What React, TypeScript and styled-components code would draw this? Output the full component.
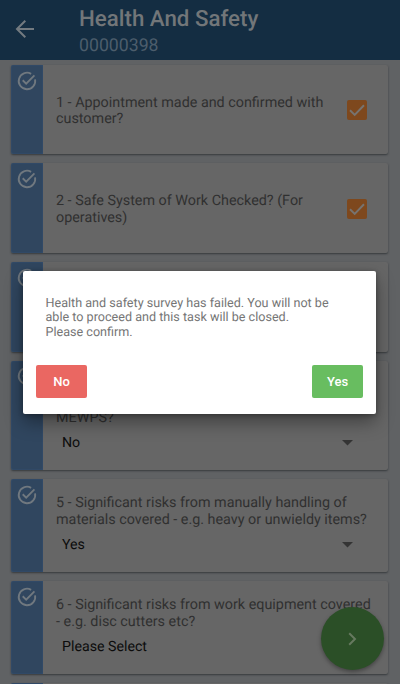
import React from 'react';
import styled, { createGlobalStyle } from 'styled-components';

const Global = createGlobalStyle`
  * { box-sizing: border-box; }
  body { margin: 0; background: #606264; overflow: hidden; }
  button { font-family: inherit; border: 0; padding: 0; }
`;

const Screen = styled.div`
  position: relative;
  width: 400px;
  height: 684px;
  overflow: hidden;
  background: #606264;
  font-family: Roboto, sans-serif;
  text-rendering: geometricPrecision;
`;

const Header = styled.header`
  display: flex;
  height: 60px;
  background: #142d42;
`;

const BackButton = styled.button`
  display: flex;
  width: 79px;
  padding: 17px 0 0 13px;
  background: none;
`;

const Titles = styled.div`
  padding-top: 6px;
`;

const Title = styled.h1`
  margin: 0;
  font-size: 22.3px;
  line-height: 27px;
  font-weight: 500;
  white-space: nowrap;
  color: #727679;
`;

const Subtitle = styled.div`
  font-size: 17.7px;
  line-height: 26px;
  color: #4c5d6c;
`;

const List = styled.main`
  display: flex;
  flex-direction: column;
  gap: 9px;
  padding: 5px 12px 0 11px;
`;

const Card = styled.section<{ $height: number }>`
  display: flex;
  flex: none;
  height: ${(p) => p.$height}px;
  border-radius: 2px;
  background: #666;
  box-shadow: 0 1px 2px rgba(20, 25, 30, 0.55);
  overflow: hidden;
`;

const Strip = styled.div`
  flex: none;
  width: 32px;
  padding: 4.6px 0 0 5px;
  background: #30465f;
  box-shadow: inset 0 0 2px #35547a;
`;

const Body = styled.div<{ $center?: boolean }>`
  flex: 1;
  display: flex;
  flex-direction: ${(p) => (p.$center ? 'row' : 'column')};
  align-items: ${(p) => (p.$center ? 'center' : 'stretch')};
  justify-content: ${(p) => (p.$center ? 'space-between' : 'flex-start')};
  padding: ${(p) => (p.$center ? '1px 21px 0 13px' : '16.2px 0 0 13px')};
`;

const Question = styled.p<{ $center?: boolean }>`
  margin: 0;
  padding-top: ${(p) => (p.$center ? '2px' : '0')};
  font-size: 14.35px;
  line-height: 16.5px;
  white-space: pre;
  color: #303030;
`;

const Select = styled.div`
  display: flex;
  align-items: center;
  justify-content: space-between;
  height: 20px;
  margin-top: 6.5px;
  padding: 0 35px 0 6px;
  font-size: 14.2px;
  color: #0c0c0c;
`;

const Checkbox = styled.span`
  display: flex;
  width: 20px;
  height: 20px;
  border-radius: 2px;
  background: #7e481d;
`;

const Fab = styled.button`
  position: absolute;
  left: 320.5px;
  top: 607px;
  display: flex;
  align-items: center;
  justify-content: center;
  width: 63px;
  height: 63px;
  border-radius: 50%;
  background: #2b4f27;
  box-shadow: 0 2px 4px rgba(0, 0, 0, 0.35);
`;

const Dialog = styled.div`
  position: absolute;
  left: 23px;
  top: 271px;
  width: 353px;
  height: 143px;
  display: flex;
  flex-direction: column;
  justify-content: space-between;
  padding: 25px 13px 16px;
  border-radius: 2px;
  background: #fff;
  box-shadow: 0 8px 18px rgba(0, 0, 0, 0.38), 0 1px 5px rgba(0, 0, 0, 0.3);
`;

const Message = styled.p`
  margin: 0;
  padding: 0.6px 0 0 9.5px;
  font-size: 12.6px;
  line-height: 14.7px;
  white-space: pre-line;
  color: #757575;
`;

const Actions = styled.div`
  display: flex;
  justify-content: space-between;
`;

const Action = styled.button<{ $color: string }>`
  width: 51px;
  height: 33px;
  border-radius: 2px;
  background: ${(p) => p.$color};
  color: #fff;
  font-size: 13px;
  font-weight: 500;
`;

const StatusIcon = () => (
  <svg width="22" height="22" viewBox="0 0 24 24" fill="none" stroke="#70787f" strokeWidth="2">
    <path d="M20.8 10.2A9 9 0 1 1 16.5 4.2" />
    <path d="M7.3 11.2l3.8 3.8 9-9.2" />
  </svg>
);

const Arrow = () => (
  <svg width="11" height="6" viewBox="0 0 11 6">
    <path d="M0 0h11L5.5 5.5z" fill="#343434" />
  </svg>
);

type Item = { text: string; height: number; value?: string };

const items: Item[] = [
  { text: '1 - Appointment made and confirmed with\ncustomer?', height: 89 },
  { text: '2 - Safe System of Work Checked? (For\noperatives)', height: 90 },
  { text: '', height: 89.5 },
  { text: '\n\nMEWPS?', height: 109.5, value: 'No' },
  { text: '5 - Significant risks from manually handling of\nmaterials covered - e.g. heavy or unwieldy items?', height: 93, value: 'Yes' },
  { text: '6 - Significant risks from work equipment covered\n- e.g. disc cutters etc?', height: 92.5, value: 'Please Select' },
  { text: '', height: 90 },
];

export default function App() {
  return (
    <>
      <Global />
      <Screen>
        <Header>
          <BackButton aria-label="Back">
            <svg width="24" height="24" viewBox="0 0 24 24" fill="none" stroke="#737a80" strokeWidth="2">
              <path d="M21 12H4.5M12.3 3.8L4 12l8.3 8.2" />
            </svg>
          </BackButton>
          <Titles>
            <Title>Health And Safety</Title>
            <Subtitle>00000398</Subtitle>
          </Titles>
        </Header>
        <List>
          {items.map((item, i) => (
            <Card key={i} $height={item.height}>
              <Strip><StatusIcon /></Strip>
              <Body $center={!item.value}>
                <Question $center={!item.value}>{item.text}</Question>
                {item.value ? (
                  <Select>{item.value}<Arrow /></Select>
                ) : (
                  <Checkbox>
                    <svg width="20" height="20" viewBox="0 0 20 20" fill="none" stroke="#77736f" strokeWidth="2">
                      <path d="M3 10.2l4.7 4.7L17 5.3" />
                    </svg>
                  </Checkbox>
                )}
              </Body>
            </Card>
          ))}
        </List>
        <Fab aria-label="Next">
          <svg width="9" height="14" viewBox="0 0 9 14" fill="none" stroke="#66795f" strokeWidth="2">
            <path d="M1.2 1.2L7 7l-5.8 5.8" />
          </svg>
        </Fab>
        <Dialog role="dialog">
          <Message>{'Health and safety survey has failed. You will not be\nable to proceed and this task will be closed.\nPlease confirm.'}</Message>
          <Actions>
            <Action $color="#ea6762">No</Action>
            <Action $color="#68bd60">Yes</Action>
          </Actions>
        </Dialog>
      </Screen>
    </>
  );
}
